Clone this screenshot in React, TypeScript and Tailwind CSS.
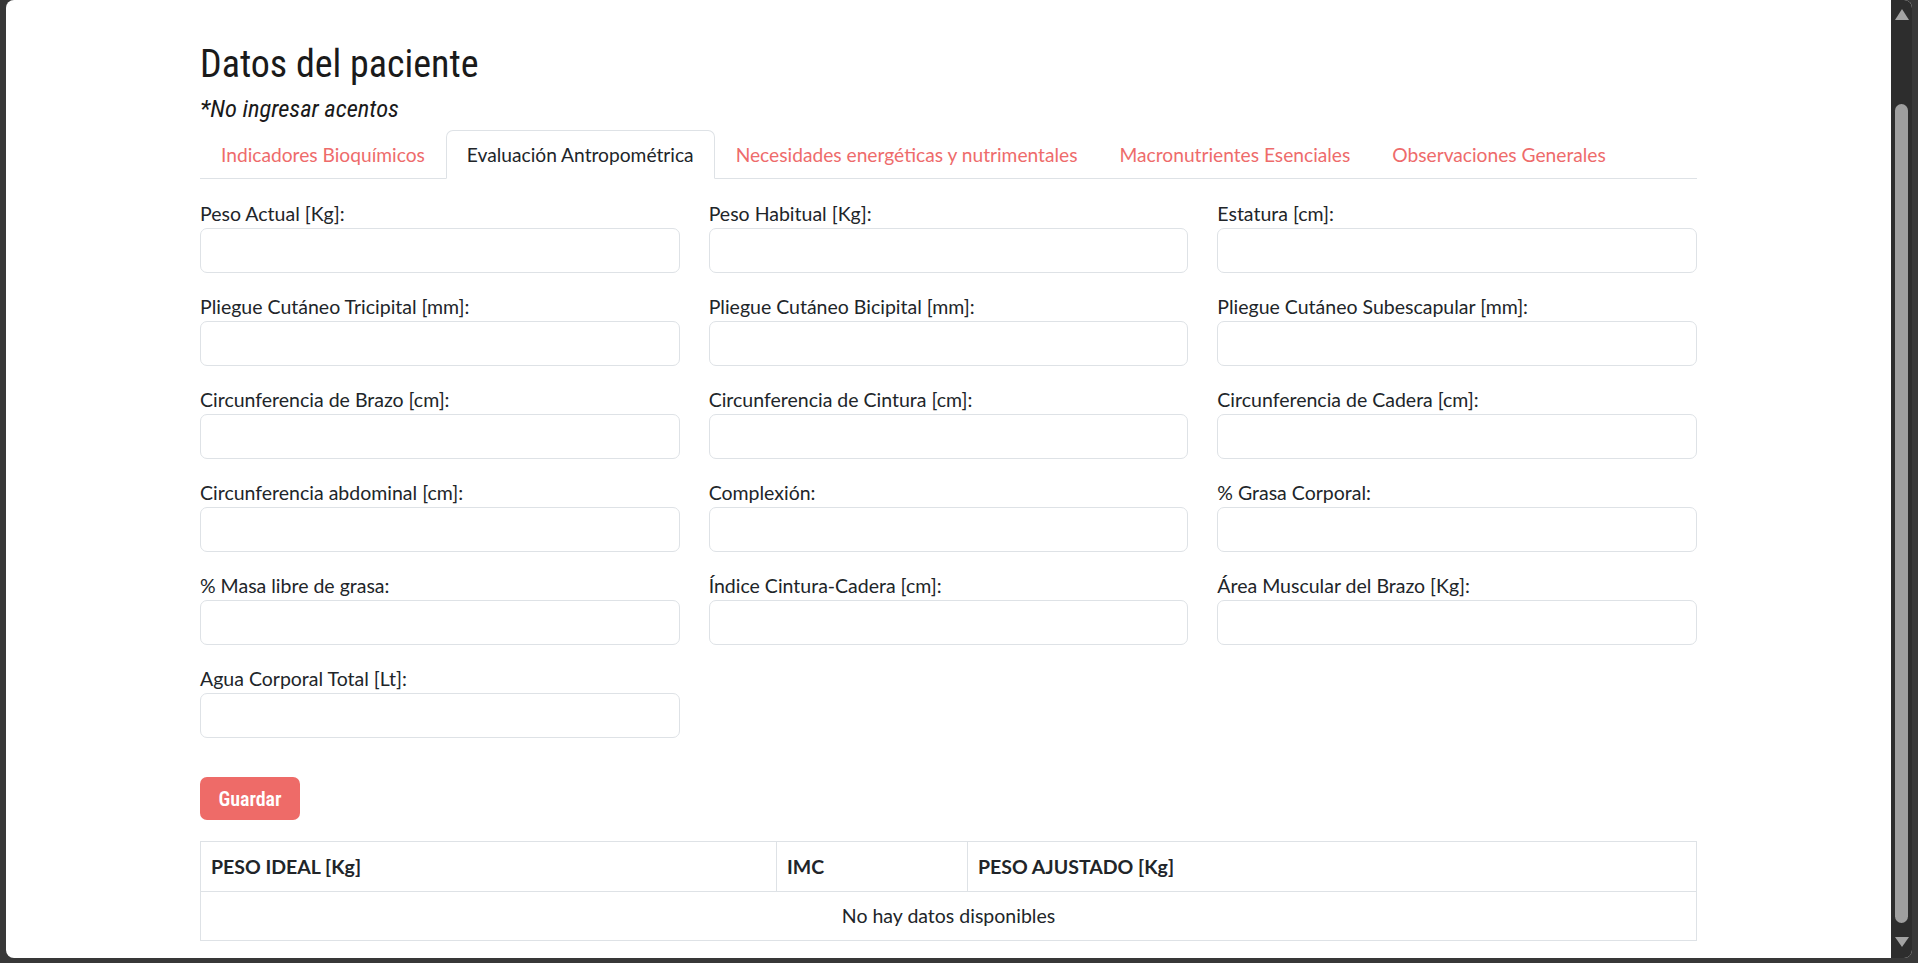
import React from 'react';

const tabs = [
  'Indicadores Bioquímicos',
  'Evaluación Antropométrica',
  'Necesidades energéticas y nutrimentales',
  'Macronutrientes Esenciales',
  'Observaciones Generales',
];

const fields = [
  'Peso Actual [Kg]:',
  'Peso Habitual [Kg]:',
  'Estatura [cm]:',
  'Pliegue Cutáneo Tricipital [mm]:',
  'Pliegue Cutáneo Bicipital [mm]:',
  'Pliegue Cutáneo Subescapular [mm]:',
  'Circunferencia de Brazo [cm]:',
  'Circunferencia de Cintura [cm]:',
  'Circunferencia de Cadera [cm]:',
  'Circunferencia abdominal [cm]:',
  'Complexión:',
  '% Grasa Corporal:',
  '% Masa libre de grasa:',
  'Índice Cintura-Cadera [cm]:',
  'Área Muscular del Brazo [Kg]:',
  'Agua Corporal Total [Lt]:',
];

const condensed = { fontFamily: '"Roboto Condensed", "Liberation Sans Narrow", "DejaVu Sans Condensed", sans-serif' };

function Scrollbar() {
  return (
    <div className="w-[21px] shrink-0 bg-[#2d2d2d] flex flex-col items-center">
      <div className="mt-[9px] w-0 h-0 border-l-[7px] border-r-[7px] border-b-[11px] border-l-transparent border-r-transparent border-b-[#a3a3a3]" />
      <div className="mt-[84px] w-[13px] h-[819px] rounded-full bg-[#9f9f9f]" />
      <div className="mt-[14px] w-0 h-0 border-l-[7px] border-r-[7px] border-t-[10px] border-l-transparent border-r-transparent border-t-[#a3a3a3]" />
    </div>
  );
}

export default function App() {
  return (
    <div className="w-[1918px] h-[963px] bg-[#383838] pl-[6px] pr-[6px] pb-[5px] overflow-hidden">
      <div className="h-full bg-white rounded-[8px] overflow-hidden flex">
        <div className="flex-1 min-w-0" style={{ fontFamily: 'Lato, "Open Sans", sans-serif' }}>
          <div className="max-w-[1497px] mx-auto text-[#212529]">
            <h1 className="mt-[43px] text-[38px] leading-[43px] text-[#1a1a1a]" style={condensed}>
              Datos del paciente
            </h1>
            <p className="mt-[8px] text-[24.5px] leading-[29px] italic text-[#1a1a1a]" style={condensed}>
              *No ingresar acentos
            </p>

            <div className="mt-[7px] flex border-b border-[#dee2e6]">
              {tabs.map((t, i) => (
                <div
                  key={t}
                  className={
                    i === 1
                      ? 'mb-[-1px] px-[20px] py-[9px] text-[19.2px] leading-[29px] border border-[#dee2e6] border-b-white bg-white rounded-t-[7px] text-[#212529]'
                      : 'mb-[-1px] px-[20px] py-[9px] text-[19.2px] leading-[29px] border border-transparent text-[#ee6b6b]'
                  }
                >
                  {t}
                </div>
              ))}
            </div>

            <div className="mt-[20px] grid grid-cols-3 gap-x-[29px]">
              {fields.map((f) => (
                <div key={f} className="mb-[19px]">
                  <label className="block text-[19.5px] leading-[29px]">{f}</label>
                  <input
                    type="text"
                    className="block w-full h-[45px] rounded-[7px] border border-[#dee2e6] bg-white px-3 outline-none"
                  />
                </div>
              ))}
            </div>

            <button
              className="mt-[20px] w-[100px] h-[43px] rounded-[7px] bg-[#ee6b68] text-white text-[20px] font-semibold"
              style={condensed}
            >
              Guardar
            </button>

            <table className="mt-[21px] w-full border-collapse border border-[#dee2e6] text-[19.5px]">
              <thead>
                <tr className="h-[50px]">
                  <th className="w-[576px] border border-[#dee2e6] px-[10px] text-left font-bold">PESO IDEAL [Kg]</th>
                  <th className="w-[191px] border border-[#dee2e6] px-[10px] text-left font-bold">IMC</th>
                  <th className="border border-[#dee2e6] px-[10px] text-left font-bold">PESO AJUSTADO [Kg]</th>
                </tr>
              </thead>
              <tbody>
                <tr className="h-[49px]">
                  <td colSpan={3} className="border border-[#dee2e6] text-center">
                    No hay datos disponibles
                  </td>
                </tr>
              </tbody>
            </table>
          </div>
        </div>
        <Scrollbar />
      </div>
    </div>
  );
}
